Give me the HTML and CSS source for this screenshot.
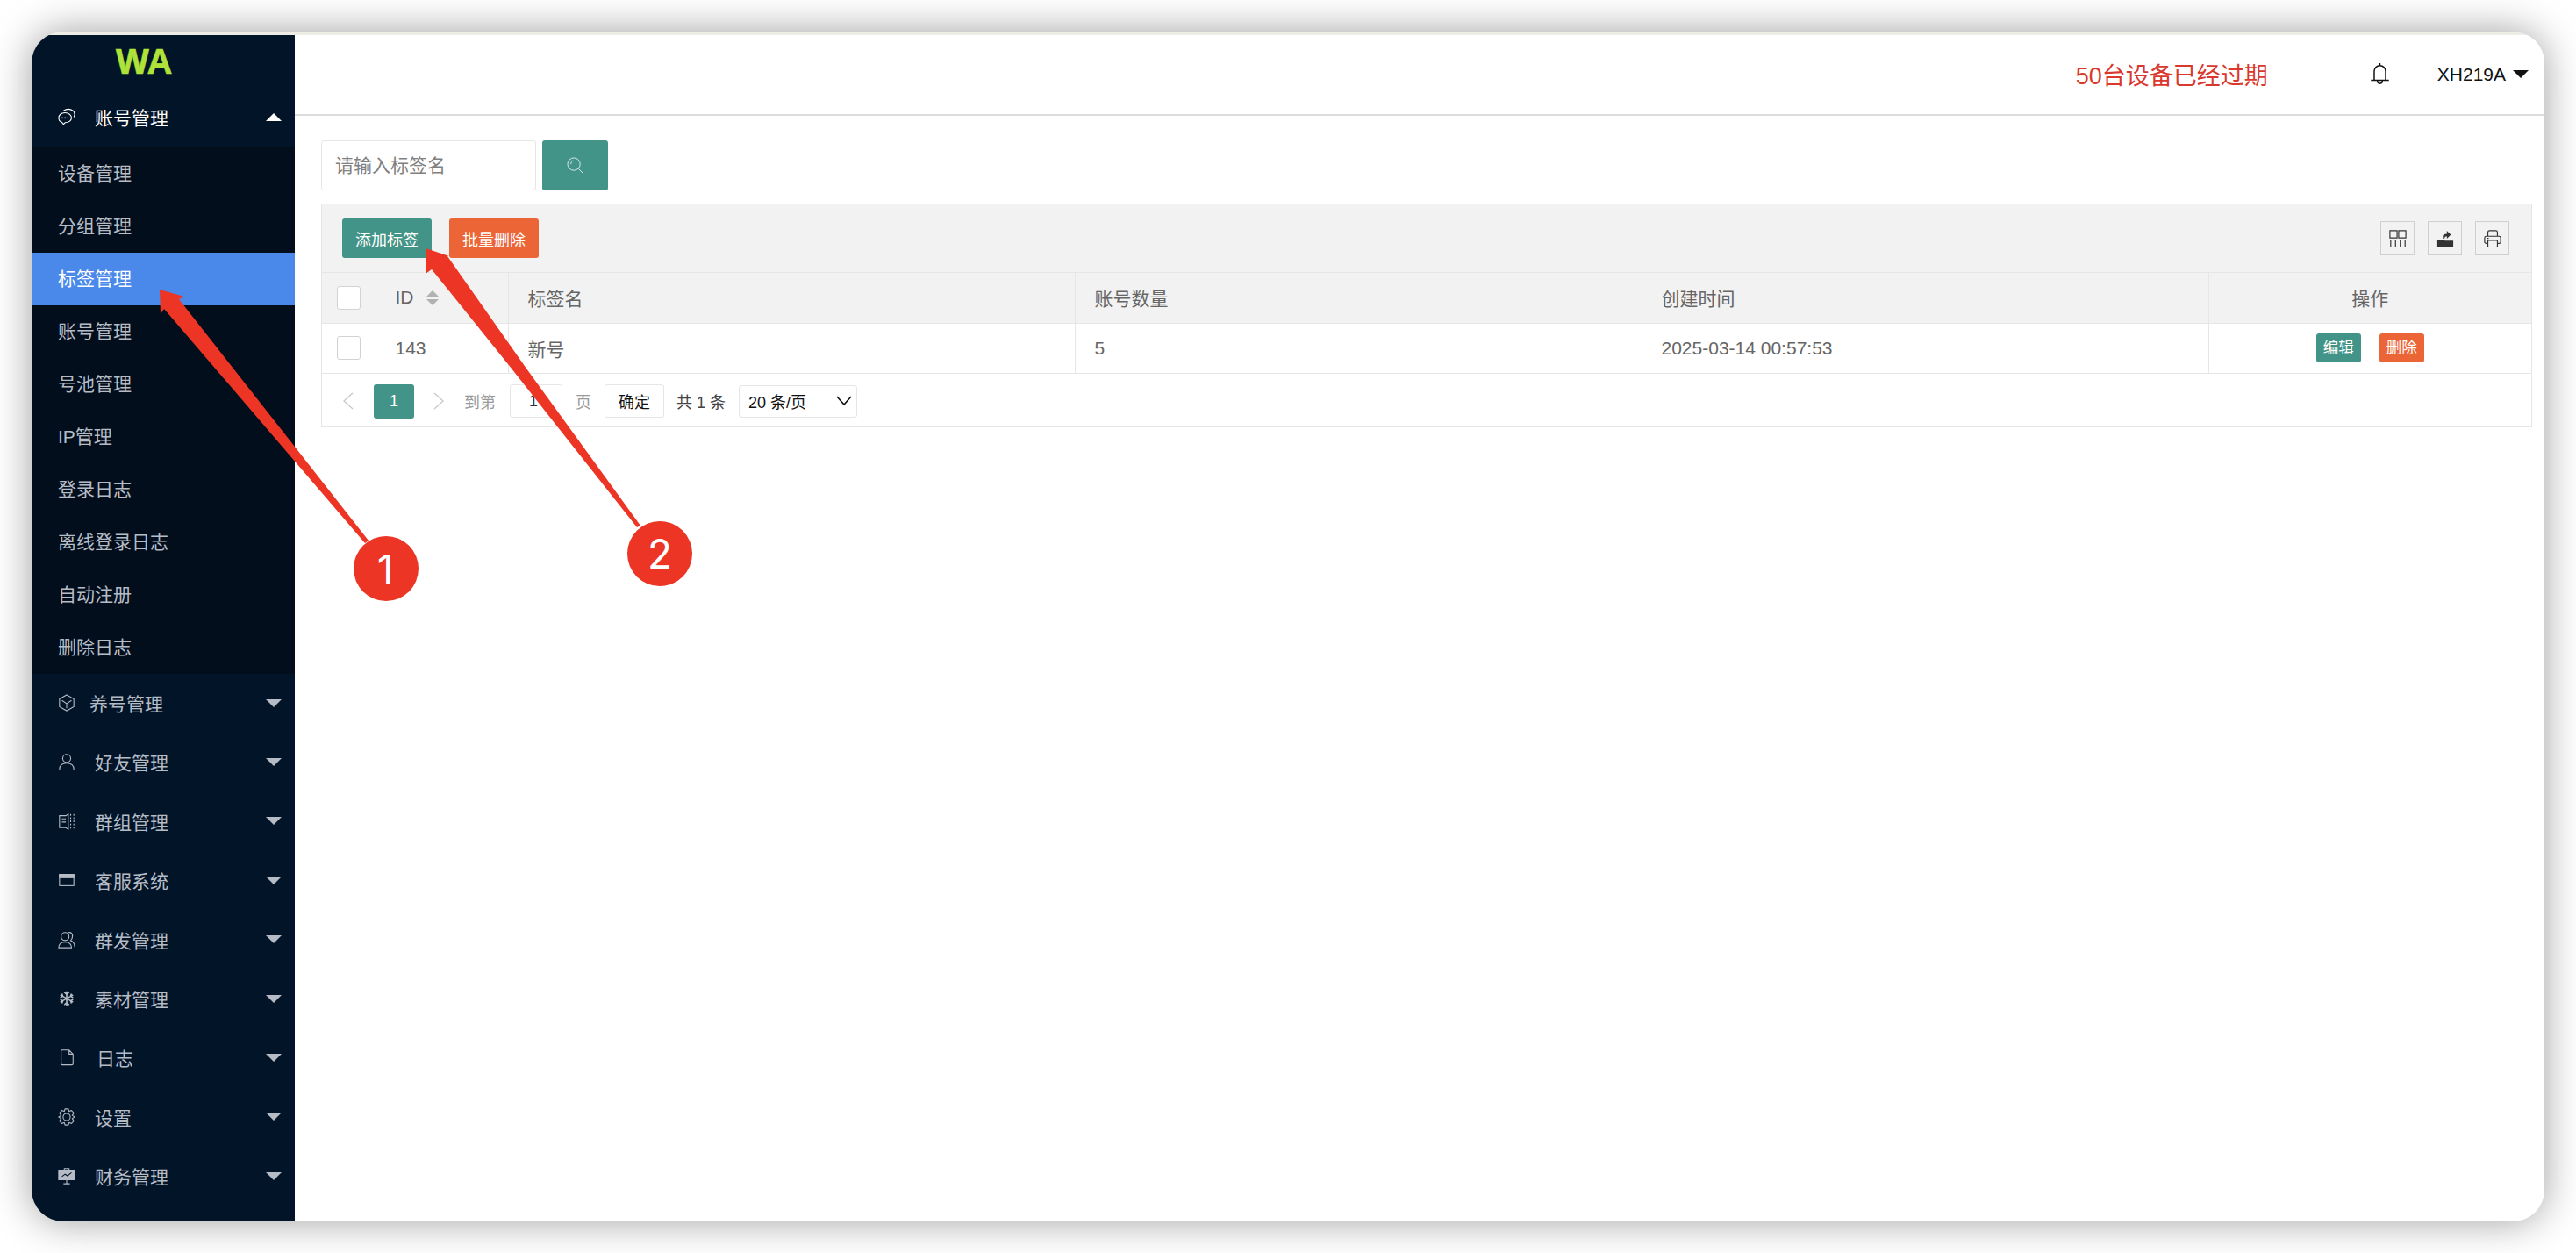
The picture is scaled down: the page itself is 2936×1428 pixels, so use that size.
FILE: index.html
```html
<!DOCTYPE html>
<html lang="zh-CN">
<head>
<meta charset="utf-8">
<title>标签管理</title>
<link rel="stylesheet" href="styles.css">
</head>
<body>
<div class="window">
  <aside class="sidebar">
    <div class="logo">WA</div>
    <div class="nav-item open">
      <svg class="nav-icon" viewBox="0 0 22 22"><path d="M9 6c-5 0-8 3-8 6.500 0 3 2 5 4 5.500l2 2.500 2-2c5 0 8-3 8-6s-3-6.500-8-6.500z"/><path d="M7 3.500c4-2.500 9-2 12 0 2 2 2.500 5 1 8"/><circle class="dot" cx="5.500" cy="12.500" r="1"/><circle class="dot" cx="9" cy="12.500" r="1"/><circle class="dot" cx="12.500" cy="12.500" r="1"/></svg>
      <span class="nav-label">账号管理</span><i class="caret up"></i>
    </div>
    <div class="submenu">
      <div class="sub-item">设备管理</div>
      <div class="sub-item">分组管理</div>
      <div class="sub-item active">标签管理</div>
      <div class="sub-item">账号管理</div>
      <div class="sub-item">号池管理</div>
      <div class="sub-item">IP管理</div>
      <div class="sub-item">登录日志</div>
      <div class="sub-item">离线登录日志</div>
      <div class="sub-item">自动注册</div>
      <div class="sub-item">删除日志</div>
    </div>
    <div class="nav-item tight">
      <svg class="nav-icon" viewBox="0 0 22 22"><path d="M11 1l9 5v10l-9 5-9-5V6z"/><path d="M5 8l6 4 6-4M11 12v6"/></svg>
      <span class="nav-label">养号管理</span><i class="caret"></i>
    </div>
    <div class="nav-item">
      <svg class="nav-icon" viewBox="0 0 22 22"><circle cx="11" cy="7" r="5"/><path d="M2 21c0-5 3-8 9-8s9 3 9 8"/></svg>
      <span class="nav-label">好友管理</span><i class="caret"></i>
    </div>
    <div class="nav-item">
      <svg class="nav-icon" viewBox="0 0 22 22"><path d="M10 4H2v15h8l3 2V2zM5 8h5M5 12h5"/><path class="dash" d="M16 2v19M20 2v19"/></svg>
      <span class="nav-label">群组管理</span><i class="caret"></i>
    </div>
    <div class="nav-item">
      <svg class="nav-icon" viewBox="0 0 22 22"><rect x="2" y="4" width="18" height="14"/><rect class="fill" x="2" y="4" width="18" height="4"/></svg>
      <span class="nav-label">客服系统</span><i class="caret"></i>
    </div>
    <div class="nav-item">
      <svg class="nav-icon" viewBox="0 0 22 22"><circle cx="9" cy="7" r="5"/><path d="M1 21c0-5 3-7 8-7s8 2 8 7zM13 2c4-1 6 2 5 6 0 2-1 3-2 4 3 1 5 4 5 8"/></svg>
      <span class="nav-label">群发管理</span><i class="caret"></i>
    </div>
    <div class="nav-item">
      <svg class="nav-icon" viewBox="0 0 22 22"><path class="bold" d="M11 2v18M3 6.500l16 9M19 6.500l-16 9M8 3l3 3 3-3M8 19l3-3 3 3M3 10l3-2-1-3M19 10l-3-2 1-3M3 12l3 2-1 3M19 12l-3 2 1 3"/></svg>
      <span class="nav-label">素材管理</span><i class="caret"></i>
    </div>
    <div class="nav-item wide">
      <svg class="nav-icon" viewBox="0 0 22 22"><path d="M5 2h9l5 5v12a1.500 1.500 0 0 1-1.500 1.500h-12A1.500 1.500 0 0 1 4 19V3a1.500 1.500 0 0 1 1-1zM14 2v5h5"/></svg>
      <span class="nav-label">日志</span><i class="caret"></i>
    </div>
    <div class="nav-item">
      <svg class="nav-icon" viewBox="0 0 22 22"><circle cx="11" cy="11" r="4.500"/><path d="M9 1h4l1 3 3-1 3 3-2 3 3 2-3 2 2 3-3 3-3-1-1 3H9l-1-3-3 1-3-3 2-3-3-2 3-2-2-3 3-3 3 1z"/></svg>
      <span class="nav-label">设置</span><i class="caret"></i>
    </div>
    <div class="nav-item">
      <svg class="nav-icon" viewBox="0 0 22 22"><path class="fill" d="M1 4h20v12H1z"/><path d="M8 4V2h6v2M11 16v5M7 21h8"/><path class="dark" d="M5 12l4-3 3 2 5-4"/></svg>
      <span class="nav-label">财务管理</span><i class="caret"></i>
    </div>
  </aside>

  <main class="main">
    <header class="topbar">
      <span class="expired">50台设备已经过期</span>
      <svg class="bell" viewBox="0 0 24 28"><path d="M12 1v3M5 22V11a7 7 0 0 1 14 0v11M1 22h22M9 23a3 3 0 0 0 6 0"/></svg>
      <span class="user">XH219A</span><i class="user-caret"></i>
    </header>

    <section class="content">
      <div class="search">
        <input class="search-input" type="text" placeholder="请输入标签名">
        <button class="search-btn" type="button">
          <svg viewBox="0 0 20 20"><circle cx="8.500" cy="8.500" r="7.500"/><path d="M14 14l5 5M5 8.500c0-2 1-3.500 2.500-4.500"/></svg>
        </button>
      </div>

      <div class="panel">
        <div class="toolbar">
          <button class="btn btn-green" type="button">添加标签</button>
          <button class="btn btn-orange" type="button">批量删除</button>
          <div class="tools">
            <span class="tool"><svg viewBox="0 0 22 22"><path d="M1 1h9v9H1zM12 1h9v9h-9zM2 13v9M8 13v9M14 13v9M20 13v9"/></svg></span>
            <span class="tool"><svg viewBox="0 0 22 22"><path class="solid" d="M1 12h8l1.500 1.500H21V22H1z"/><path class="solid" d="M8 11V8c0-2 2-3 5-3V1l5 5-5 5V8c-2 0-3 1-3 3z"/></svg></span>
            <span class="tool"><svg viewBox="0 0 22 22"><path d="M5 8V3a2 2 0 0 1 2-2h8a2 2 0 0 1 2 2v5M5 17H3a2 2 0 0 1-2-2v-5a2 2 0 0 1 2-2h16a2 2 0 0 1 2 2v5a2 2 0 0 1-2 2h-2M5 13h12v7a2 2 0 0 1-2 2H7a2 2 0 0 1-2-2zM4 10.500h2"/></svg></span>
          </div>
        </div>

        <table class="grid">
          <colgroup>
            <col class="col-check"><col class="col-id"><col class="col-data"><col class="col-data"><col class="col-data"><col>
          </colgroup>
          <thead>
            <tr>
              <th><span class="check"></span></th>
              <th><span class="id-head">ID<span class="sort"><i class="sort-up"></i><i class="sort-down"></i></span></span></th>
              <th>标签名</th>
              <th>账号数量</th>
              <th>创建时间</th>
              <th class="center">操作</th>
            </tr>
          </thead>
          <tbody>
            <tr>
              <td><span class="check"></span></td>
              <td>143</td>
              <td>新号</td>
              <td>5</td>
              <td>2025-03-14 00:57:53</td>
              <td class="center actions"><span class="tag tag-green">编辑</span><span class="tag tag-orange">删除</span></td>
            </tr>
          </tbody>
        </table>

        <div class="pager">
          <svg class="pg-arrow" viewBox="0 0 12 20"><path d="M11 1L1 10l10 9"/></svg>
          <span class="pg-current">1</span>
          <svg class="pg-arrow pg-next" viewBox="0 0 12 20"><path d="M1 1l10 9-10 9"/></svg>
          <span class="pg-muted">到第</span>
          <input class="pg-input" type="text" value="1">
          <span class="pg-muted pg-unit">页</span>
          <button class="pg-ok" type="button">确定</button>
          <span class="pg-total">共 1 条</span>
          <span class="pg-select">20 条/页<svg viewBox="0 0 18 12"><path d="M1 1l8 9 8-9"/></svg></span>
        </div>
      </div>
    </section>
  </main>
</div>

<svg class="annotations" viewBox="0 0 2936 1428">
  <polygon class="mark" points="182,330 210,338 204,341 420,616 416,619 187,352 183,358"/>
  <polygon class="mark" points="485,283 512,292 510,292 600,420 730,599 726,601 583,420 492,307 485,312"/>
  <circle class="mark" cx="440" cy="648" r="37"/>
  <circle class="mark" cx="752" cy="631" r="37"/>
  <text class="mark-num" x="439" y="666">1</text>
  <text class="mark-num" x="752" y="648">2</text>
</svg>
</body>
</html>
```

FILE: styles.css
```css
* { box-sizing: border-box; }

html, body { margin: 0; height: 100%; background: #fff; }

body {
  position: relative;
  padding: 36px;
  overflow: hidden;
  font-family: "Liberation Sans", "Noto Sans CJK SC", sans-serif;
}

.window {
  display: flex;
  height: 100%;
  padding-top: 4px;
  border-radius: 36px;
  background: #eeeee6;
  overflow: hidden;
  box-shadow: 0 0 46px rgba(0, 0, 0, .38);
}

/* sidebar */
.sidebar {
  flex: 0 0 300px;
  background: #021428;
  color: #b6bcc6;
}

.logo {
  height: 60.5px;
  padding: 8px 0 0 96px;
  color: #b0e33a;
  font-size: 40px;
  line-height: 44px;
  font-weight: 700;
  -webkit-text-stroke: .6px #b0e33a;
}

.nav-item {
  display: flex;
  align-items: center;
  height: 67.4px;
  padding: 0 15px 1px 30px;
  font-size: 21px;
}

.nav-item.open { padding-bottom: 2px; color: #fff; }

.nav-icon {
  flex: none;
  width: 20px;
  height: 20px;
  margin-right: 22px;
  fill: none;
  stroke: currentColor;
  stroke-width: 1.2;
}

.nav-icon .dot { fill: currentColor; stroke: none; }
.nav-icon .fill { fill: currentColor; }
.nav-icon .dash { stroke-dasharray: 2 2; }
.nav-icon .bold { stroke-width: 1.8; }
.nav-icon .dark { stroke: #021428; }

.tight .nav-icon { margin-right: 16px; }
.wide .nav-icon { margin-right: 24px; }

.nav-label { flex: 1; }

.caret {
  width: 0;
  height: 0;
  border-left: 9px solid transparent;
  border-right: 9px solid transparent;
  border-top: 9px solid currentColor;
}

.caret.up {
  border-top: 0;
  border-bottom: 9px solid currentColor;
}

.submenu { background: #020e1b; }

.sub-item {
  height: 60px;
  padding-left: 30px;
  font-size: 21px;
  line-height: 60px;
}

.sub-item.active {
  background: #4a89ea;
  color: #fff;
}

/* main */
.main {
  flex: 1;
  display: flex;
  flex-direction: column;
  min-width: 0;
  background: #fff;
}

.topbar {
  flex: 0 0 92px;
  display: flex;
  align-items: center;
  justify-content: flex-end;
  padding: 0 18px 2px 0;
  border-bottom: 2px solid #dcdcdc;
  background: #fff;
}

.expired {
  margin-right: 116px;
  color: #d9382e;
  font-size: 27px;
}

.bell {
  width: 23px;
  height: 26px;
  margin-right: 54px;
  fill: none;
  stroke: #111;
  stroke-width: 1.6;
}

.user {
  margin-right: 8px;
  padding-top: 2px;
  color: #111;
  font-size: 21px;
}

.user-caret {
  width: 0;
  height: 0;
  border-left: 9px solid transparent;
  border-right: 9px solid transparent;
  border-top: 9px solid #111;
}

.content {
  flex: 1;
  padding: 28px 14px 0 30px;
}

.search {
  display: flex;
  gap: 7px;
  height: 57px;
  margin-bottom: 15px;
}

.search-input {
  width: 245px;
  padding: 0 15px;
  border: 1px solid #e6e6e6;
  border-radius: 3px;
  outline: 0;
  font: 21px "Liberation Sans", "Noto Sans CJK SC", sans-serif;
}

.search-input::placeholder { color: #808080; opacity: 1; }

.search-btn {
  display: flex;
  align-items: center;
  justify-content: center;
  width: 75px;
  padding: 0;
  border: 0;
  border-radius: 3px;
  background: #429488;
}

.search-btn svg {
  width: 19px;
  height: 19px;
  fill: none;
  stroke: #dcecea;
  stroke-width: 1;
}

/* panel */
.panel {
  border: 1px solid #e6e6e6;
  border-top-color: #e8e8e8;
}

.toolbar {
  display: flex;
  align-items: center;
  height: 78px;
  padding: 0 25px 0 23px;
  border-bottom: 1px solid #e6e6e6;
  background: #f2f2f2;
}

.btn {
  width: 102px;
  height: 45px;
  margin-right: 20px;
  padding: 0;
  border: 0;
  border-radius: 3px;
  color: #fff;
  font: 18px "Liberation Sans", "Noto Sans CJK SC", sans-serif;
}

.btn-green { background: #429488; }
.btn-orange { background: #ec6536; }

.tools {
  display: flex;
  gap: 15px;
  margin-left: auto;
}

.tool {
  display: flex;
  align-items: center;
  justify-content: center;
  width: 39px;
  height: 39px;
  border: 1px solid #cfcfcf;
}

.tool svg {
  width: 20px;
  height: 20px;
  fill: none;
  stroke: #333;
  stroke-width: 1.3;
}

.tool .solid { fill: #333; stroke: none; }

.grid {
  width: 100%;
  border-collapse: collapse;
  table-layout: fixed;
  color: #666;
  font-size: 21px;
}

.col-check { width: 61px; }
.col-id { width: 151px; }
.col-data { width: 646px; }

.grid th, .grid td {
  height: 57px;
  padding: 0 22px;
  border-right: 1px solid #e6e6e6;
  border-bottom: 1px solid #e6e6e6;
  font-weight: 400;
  text-align: left;
  white-space: nowrap;
}

.grid th { background: #f2f2f2; }
.grid th:first-child, .grid td:first-child { padding: 0 0 0 17px; }
.grid th:last-child, .grid td:last-child { border-right: 0; }
.grid .center { padding: 0; text-align: center; }

.check {
  display: block;
  width: 27px;
  height: 27px;
  border: 1px solid #d2d2d2;
  border-radius: 3px;
  background: #fff;
}

.id-head {
  display: inline-flex;
  align-items: center;
}

.sort {
  display: inline-flex;
  flex-direction: column;
  gap: 3px;
  margin-left: 14px;
}

.sort i {
  width: 0;
  height: 0;
  border-left: 7px solid transparent;
  border-right: 7px solid transparent;
}

.sort-up { border-bottom: 7px solid #b2b2b2; }
.sort-down { border-top: 7px solid #b2b2b2; }

.actions { font-size: 0; }

.tag {
  display: inline-block;
  width: 51px;
  height: 33px;
  border-radius: 3px;
  color: #fff;
  font-size: 17.5px;
  line-height: 33px;
  text-align: center;
}

.tag-green { background: #429488; }
.tag-orange { margin-left: 21px; background: #ec6536; }

/* pagination */
.pager {
  display: flex;
  align-items: center;
  height: 60px;
  padding: 3px 0 0 24px;
  font-size: 18px;
}

.pg-arrow {
  flex: none;
  width: 12px;
  height: 20px;
  margin-right: 23px;
  fill: none;
  stroke: #c8c8c8;
  stroke-width: 1.3;
}

.pg-next { margin: 0 23px 0 22px; }

.pg-current {
  width: 46px;
  height: 39px;
  border-radius: 3px;
  background: #429488;
  color: #fff;
  line-height: 39px;
  text-align: center;
}

.pg-muted { color: #999; }

.pg-input {
  width: 60px;
  height: 38px;
  margin: 0 15px 0 16px;
  padding: 0 6px 0 0;
  border: 1px solid #e6e6e6;
  border-radius: 3px;
  color: #333;
  font: 18px "Liberation Sans", "Noto Sans CJK SC", sans-serif;
  text-align: center;
}

.pg-unit { margin-right: 15px; }

.pg-ok {
  width: 68px;
  height: 38px;
  padding: 0;
  border: 1px solid #e6e6e6;
  border-radius: 3px;
  background: #fff;
  color: #111;
  font: 18px "Liberation Sans", "Noto Sans CJK SC", sans-serif;
}

.pg-total {
  margin: 0 15px 0 14px;
  color: #444;
}

.pg-select {
  display: flex;
  align-items: center;
  justify-content: space-between;
  width: 135px;
  height: 37px;
  padding: 0 5px 0 10px;
  border: 1px solid #e6e6e6;
  border-radius: 3px;
  color: #111;
}

.pg-select svg {
  width: 18px;
  height: 12px;
  fill: none;
  stroke: #111;
  stroke-width: 1.6;
}

/* annotations */
.annotations {
  position: absolute;
  top: 0;
  left: 0;
  width: 2936px;
  height: 1428px;
  pointer-events: none;
}

.mark { fill: #ec3524; }

.mark-num {
  fill: #fff;
  font-family: "Inter", "Liberation Sans", sans-serif;
  font-size: 46px;
  text-anchor: middle;
}
```
